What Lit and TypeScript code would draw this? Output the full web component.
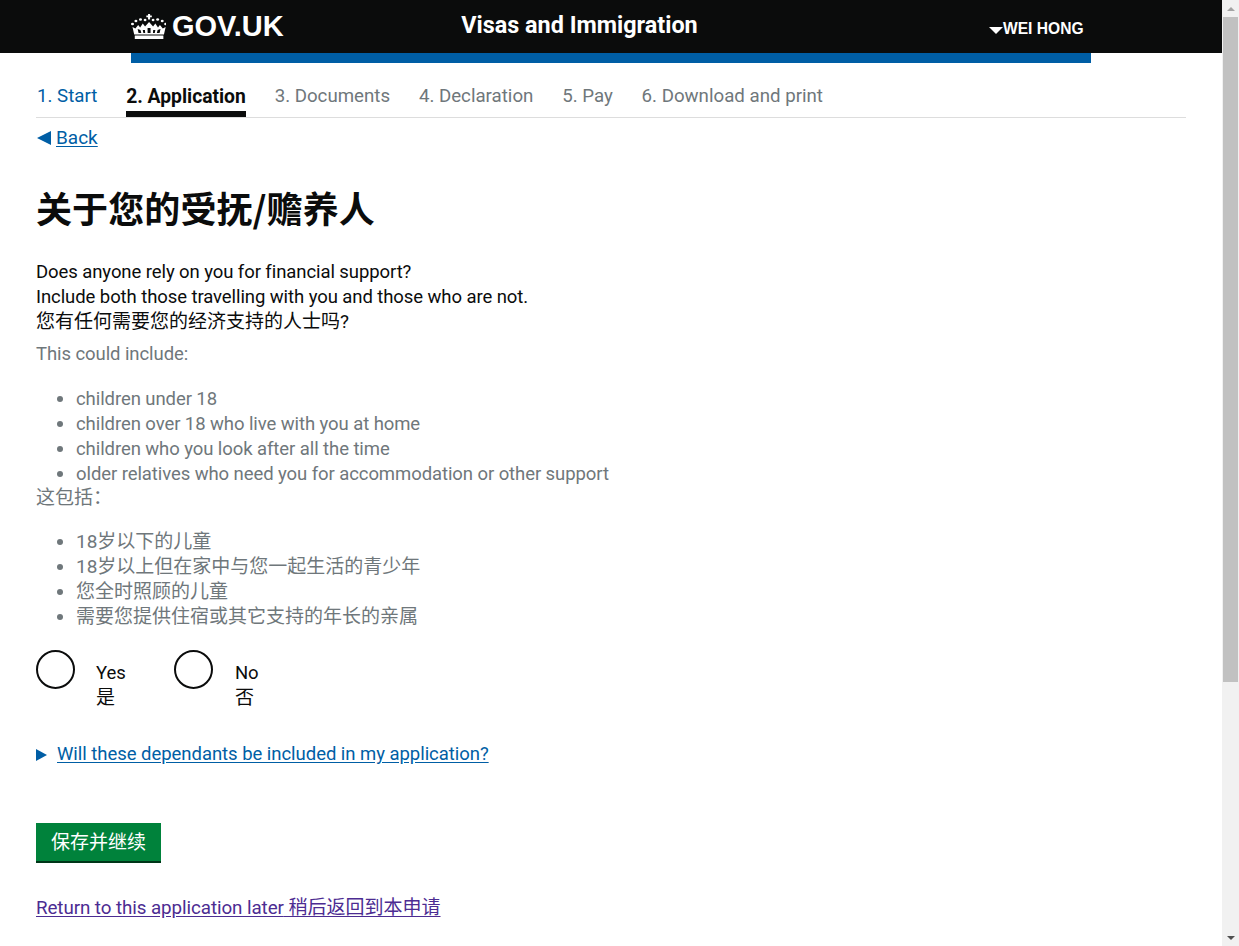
import { LitElement, html, css } from "lit";
import { customElement } from "lit/decorators.js";

const STEPS = ["3. Documents", "4. Declaration", "5. Pay", "6. Download and print"];
const EN = ["children under 18", "children over 18 who live with you at home", "children who you look after all the time", "older relatives who need you for accommodation or other support"];
const ZH = ["18岁以下的儿童", "18岁以上但在家中与您一起生活的青少年", "您全时照顾的儿童", "需要您提供住宿或其它支持的年长的亲属"];

@customElement("app-root")
export class AppRoot extends LitElement {
  static styles = css`
    :host { display: flex; width: 1239px; height: 946px; overflow: hidden; background: #fff; color: #0b0c0c;
      font-family: Roboto, "Noto Sans CJK SC", sans-serif; font-size: 19px; line-height: 25px; }
    .en { font-size: 18.5px; letter-spacing: -.08px; }
    span.en { line-height: 1; }
    .page { width: 1222px; flex: none; }
    .top { height: 53px; background: #0b0c0c; color: #fff; padding-left: 131px; display: flex; align-items: flex-start; }
    .logo { width: 330px; height: 53px; display: flex; align-items: center; gap: 6px; font: 700 29px/53px "Liberation Sans", sans-serif; }
    .logo svg { width: 35px; height: 25px; flex: none; margin-bottom: 1px; }
    .service { width: 237px; text-align: center; font: 700 23.4px/51px Roboto, sans-serif; white-space: nowrap; }
    .user { margin-left: 291px; display: flex; align-items: center; height: 57px; font: 700 15.6px/1 "Liberation Sans", sans-serif; }
    .user i { width: 0; height: 0; border: 7px solid transparent; border-top: 7px solid #fff; border-bottom: 0; margin-top: 3px; }
    .blue { height: 10px; width: 960px; margin-left: 131px; background: #005ea5; }
    .main { padding: 0 36px; }
    .steps { display: flex; gap: 28.8px; width: 1150px; height: 55px; box-sizing: border-box; border-bottom: 1px solid #ddd; padding: 21px 0 0 1px; color: #6f777b; white-space: nowrap; }
    .steps span { display: block; height: 33px; font-size: 18.7px; line-height: 25px; }
    .steps .done { color: #005ea5; }
    .steps .cur { color: #0b0c0c; font-weight: 700; font-size: 19.3px; border-bottom: 6px solid #0b0c0c; box-sizing: border-box; }
    a { color: #005ea5; text-decoration: underline; text-underline-offset: 2px; }
    .back { display: flex; align-items: center; gap: 5px; height: 25px; margin-top: 7px; padding-left: 1px; }
    .back i { width: 0; height: 0; border: 7px solid transparent; border-right: 14px solid #005ea5; border-left: 0; }
    h1 { margin: 32px 0 0; font: 700 36px/50px "Noto Sans CJK SC", sans-serif; letter-spacing: .1px; }
    .q { margin: 27px 0 0; }
    .hint { color: #6f777b; margin-top: 8px; }
    .hint p { margin: 0; }
    .hint p.zh { margin-top: -1px; }
    ul { margin: 19px 0 0; padding: 0 0 0 40px; }
    .radios { display: flex; margin-top: 21px; }
    .radio { display: flex; width: 138px; height: 72px; }
    .radio i { width: 39px; height: 39px; box-sizing: border-box; border: 2px solid #0b0c0c; border-radius: 50%; flex: none; }
    .radio div { margin: 10px 0 0 21px; }
    .radio + .radio div { margin-left: 22px; }
    .details { display: flex; align-items: center; gap: 10px; margin-top: 20px; }
    .details i { width: 0; height: 0; border: 6px solid transparent; border-left: 11px solid #005ea5; border-right: 0; }
    .details a { letter-spacing: -.04px; }
    .btn { display: inline-block; margin-top: 56px; height: 40px; box-sizing: border-box; padding: 0 15px; background: #00823b; border-bottom: 2px solid #003618; color: #fff; line-height: 39px; }
    .later { margin-top: 32px; }
    .later a { color: #4c2c92; }
    .later .en { font-size: 18.8px; }
    .bar { width: 17px; height: 946px; flex: none; background: #f1f1f1; display: flex; flex-direction: column; align-items: center; }
    .arrow { height: 17px; flex: none; display: flex; align-items: center; justify-content: center; }
    .arrow i { width: 0; height: 0; border: 4px solid transparent; }
    .up i { border-bottom: 4px solid #a3a3a3; border-top: 0; }
    .dn i { border-top: 4px solid #505050; border-bottom: 0; }
    .thumb { width: 15px; height: 665px; background: #c1c1c1; flex: none; }
    .fill { flex: 1; }
  `;

  render() {
    return html`
      <div class="page">
        <div class="top">
          <div class="logo">
            <svg viewBox="1.700 1 30.600 25" preserveAspectRatio="none" fill="#fff" aria-hidden="true">
              <path d="M16.600 1h1.800v1.500h1.500v1.700h-1.500v2.300h-1.800V4.200h-1.500V2.500h1.500z"/>
              <circle cx="3" cy="11" r="1.300"/><circle cx="6" cy="8" r="1.300"/><circle cx="10" cy="6.500" r="1.300"/><circle cx="14" cy="7" r="1.200"/><circle cx="21" cy="7" r="1.200"/><circle cx="25" cy="6.500" r="1.300"/><circle cx="29" cy="8" r="1.300"/><circle cx="32" cy="11" r="1.300"/>
              <path fill-rule="evenodd" d="M3 14l2.500 1.500L8 12l1.700 2.500L12 10.500l2 3 3.500-4.500 3.500 4.500 2-3 2.300 4L27 12l2.500 3.500L32 14l-1.500 7.500h-26zM7.500 16l.8 4h2.400l-.7-3zM16.200 15v5h2.600v-5zM12 17l.5 3h1.600l-.2-3zM21.100 17l-.2 3h1.600l.5-3zM25 17l-.7 3h2.400l.8-4z"/>
              <rect x="5" y="22.500" width="25" height="3.500"/>
            </svg>
            <span>GOV.UK</span>
          </div>
          <div class="service">Visas and Immigration</div>
          <div class="user"><i></i><span>WEI HONG</span></div>
        </div>
        <div class="blue"></div>
        <div class="main">
          <nav class="steps">
            <span class="done">1. Start</span>
            <span class="cur">2. Application</span>
            ${STEPS.map((s) => html`<span>${s}</span>`)}
          </nav>
          <div class="back"><i></i><a href="#">Back</a></div>
          <h1>关于您的受抚/赡养人</h1>
          <div class="q"><span class="en">Does anyone rely on you for financial support?<br />Include both those travelling with you and those who are not.</span><br />您有任何需要您的经济支持的人士吗?</div>
          <div class="hint">
            <p class="en">This could include:</p>
            <ul>${EN.map((t) => html`<li><span class="en">${t}</span></li>`)}</ul>
            <p class="zh">这包括：</p>
            <ul>${ZH.map((t) => html`<li>${t}</li>`)}</ul>
          </div>
          <div class="radios">
            <div class="radio"><i></i><div><span class="en">Yes</span><br />是</div></div>
            <div class="radio"><i></i><div><span class="en">No</span><br />否</div></div>
          </div>
          <div class="details"><i></i><a class="en" href="#">Will these dependants be included in my application?</a></div>
          <div><span class="btn">保存并继续</span></div>
          <div class="later"><a href="#"><span class="en">Return to this application later</span> 稍后返回到本申请</a></div>
        </div>
      </div>
      <div class="bar">
        <div class="arrow up"><i></i></div>
        <div class="thumb"></div>
        <div class="fill"></div>
        <div class="arrow dn"><i></i></div>
      </div>
    `;
  }
}
